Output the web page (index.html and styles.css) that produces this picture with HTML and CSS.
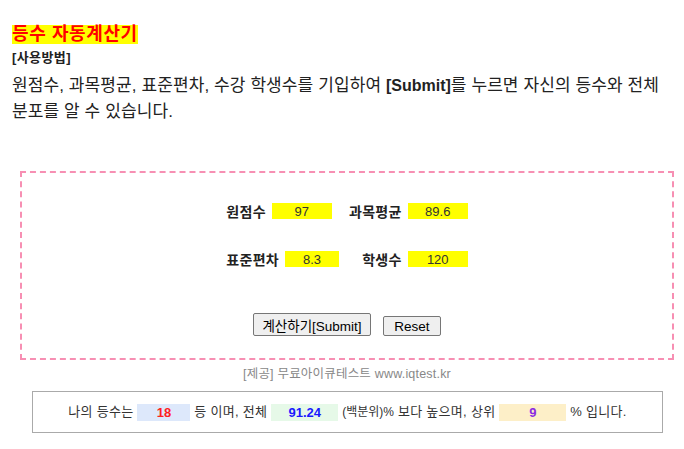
FILE: index.html
```html
<!DOCTYPE html>
<html lang="ko">
<head>
    <meta charset="UTF-8">
    <meta name="viewport" content="width=device-width, initial-scale=1.0">
    <title>등수 자동계산기</title>
    <link rel="stylesheet" href="styles.css">
</head>
<body>

<h1 class="title">등수 자동계산기</h1>
<div class="howto">[사용방법]</div>
<p class="intro">원점수, 과목평균, 표준편차, 수강 학생수를 기입하여 <b>[Submit]</b>를 누르면 자신의 등수와 전체 분포를 알 수 있습니다.</p>

<form class="calc" id="rankForm">
    <div class="fields">
        <label class="field left">원점수 <input type="text" class="num w60" id="score" value="97"></label>
        <label class="field right">과목평균 <input type="text" class="num w60" id="mean" value="89.6"></label>
        <label class="field left">표준편차 <input type="text" class="num w54" id="sd" value="8.3"></label>
        <label class="field right">학생수 <input type="text" class="num w60" id="count" value="120"></label>
    </div>
    <div class="buttons">
        <button type="button" class="submit" onclick="calc()">계산하기[Submit]</button>
        <button type="reset" class="reset">Reset</button>
    </div>
</form>

<div class="credit">[제공] 무료아이큐테스트 www.iqtest.kr</div>

<div class="result">나의 등수는 <span class="out rank" id="rank">18</span> 등 이며, 전체 <span class="out pct" id="pct">91.24</span> <small>(백분위)%</small> 보다 높으며, 상위 <span class="out top" id="top">9</span> % 입니다.</div>

<script>
    function erf(x) {
        const t = 1 / (1 + 0.3275911 * Math.abs(x));
        const y = 1 - (((((1.061405429 * t - 1.453152027) * t) + 1.421413741) * t - 0.284496736) * t + 0.254829592) * t * Math.exp(-x * x);
        return x >= 0 ? y : -y;
    }

    function calc() {
        const score = parseFloat(document.getElementById('score').value);
        const mean = parseFloat(document.getElementById('mean').value);
        const sd = parseFloat(document.getElementById('sd').value);
        const count = parseInt(document.getElementById('count').value);
        const z = (score - mean) / sd;
        const p = 0.5 * (1 + erf(z / Math.SQRT2));
        document.getElementById('pct').textContent = (p * 100).toFixed(2);
        document.getElementById('rank').textContent = Math.max(1, Math.round(count * (1 - p)));
        document.getElementById('top').textContent = Math.round((1 - p) * 100);
    }
</script>

</body>
</html>
```

FILE: styles.css
```css
body {
    margin: 0;
    padding: 0 12px;
    font-family: "Liberation Sans", "Noto Sans CJK KR", sans-serif;
    color: #222;
    background: #fff;
}

.title {
    display: block;
    width: fit-content;
    margin: 25px 0 0;
    font-size: 18px;
    line-height: 19px;
    letter-spacing: 0.6px;
    color: #ff0000;
    background: #ffff00;
}

.howto {
    margin-top: 6px;
    font-size: 13px;
    font-weight: bold;
    line-height: 16px;
    letter-spacing: 0.4px;
}

.intro {
    margin: 7px 0 0;
    font-size: 17px;
    line-height: 26px;
    letter-spacing: 0.1px;
}

.intro b {
    font-size: 16px;
    letter-spacing: 0;
}

.calc {
    margin: 46px 0 0 8px;
    width: 650px;
    border: 2px dashed #f78fb3;
    padding: 30px 0 22px;
}

.fields {
    display: grid;
    grid-template-columns: auto auto;
    justify-content: center;
    column-gap: 10px;
    row-gap: 32px;
    font-size: 14px;
    font-weight: bold;
    letter-spacing: 0.3px;
}

.field {
    display: flex;
    align-items: center;
    gap: 6px;
    height: 16px;
}

.field.right {
    justify-self: end;
}

.num {
    height: 16px;
    padding: 0;
    border: none;
    background: #ffff00;
    text-align: center;
    font-family: "Liberation Sans", sans-serif;
    font-size: 13px;
    font-weight: normal;
    color: #333;
    outline: none;
}

.w60 {
    width: 60px;
}

.w54 {
    width: 54px;
}

.buttons {
    display: flex;
    justify-content: center;
    align-items: flex-end;
    gap: 12px;
    margin-top: 46px;
}

.buttons button {
    font-family: "Liberation Sans", "Noto Sans CJK KR", sans-serif;
    font-size: 13.5px;
    background: #efefef;
    border: 1px solid #767676;
    border-radius: 2px;
    color: #000;
    padding: 0;
}

.submit {
    width: 118px;
    height: 23px;
}

.reset {
    width: 58px;
    height: 20px;
}

.credit {
    margin: 6px 0 0 8px;
    width: 654px;
    text-align: center;
    font-size: 12.5px;
    line-height: 16px;
    letter-spacing: 0.2px;
    color: #888;
}

.result {
    margin: 9px 0 0 20px;
    width: 629px;
    height: 40px;
    line-height: 40px;
    border: 1px solid #aaa;
    text-align: center;
    font-size: 13px;
    letter-spacing: 0.3px;
    color: #333;
}

.result small {
    font-size: 12px;
    letter-spacing: 0;
}

.out {
    display: inline-block;
    height: 17px;
    line-height: 17px;
    vertical-align: middle;
    text-align: center;
    font-size: 13px;
    font-weight: bold;
    letter-spacing: 0;
}

.rank {
    width: 53px;
    background: #dde8fb;
    color: #ff2020;
}

.pct {
    width: 67px;
    background: #e6f9e8;
    color: #1a1aff;
}

.top {
    width: 67px;
    background: #fdefc8;
    color: #8a2be2;
}
```
